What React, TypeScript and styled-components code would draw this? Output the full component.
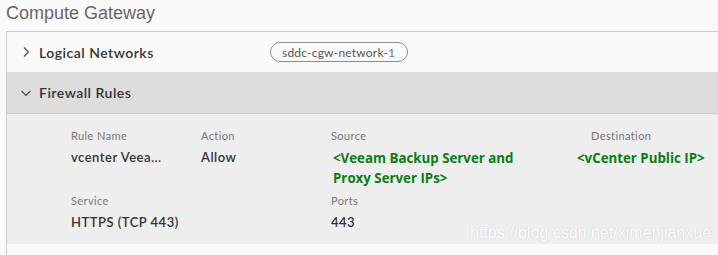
import { createGlobalStyle, styled } from 'styled-components';

const GlobalStyle = createGlobalStyle`
  html, body {
    margin: 0;
    padding: 0;
    background: #fafafa;
    font-family: Lato, "Noto Sans", sans-serif;
  }
`;

interface Field {
  label: string;
  value: string;
  highlight?: boolean;
  span?: number;
  shift?: number;
}

const ruleFields: Field[] = [
  { label: 'Rule Name', value: 'vcenter Veea...' },
  { label: 'Action', value: 'Allow' },
  { label: 'Source', value: '<Veeam Backup Server and Proxy Server IPs>', highlight: true, span: 2, shift: 2 },
  { label: 'Destination', value: '<vCenter Public IP>', highlight: true, shift: -14 },
  { label: 'Service', value: 'HTTPS (TCP 443)', span: 2 },
  { label: 'Ports', value: '443' },
];

function Chevron({ open }: { open?: boolean }) {
  return (
    <ChevronIcon viewBox="0 0 12 12" $open={open}>
      <path d="M4 1.5 L8.5 6 L4 10.5" fill="none" stroke="#4a4a4a" strokeWidth="1.2" />
    </ChevronIcon>
  );
}

export default function App() {
  return (
    <Page>
      <GlobalStyle />
      <Title>Compute Gateway</Title>
      <Panel>
        <Header>
          <Chevron />
          <HeaderText>Logical Networks</HeaderText>
          <Pill>
            sddc-cgw-network-<PillNum>1</PillNum>
          </Pill>
        </Header>
        <Header $active>
          <Chevron open />
          <HeaderText>Firewall Rules</HeaderText>
        </Header>
        <Body>
          <FieldGrid>
            {ruleFields.map((f) => (
              <Cell key={f.label} $span={f.span ?? 1}>
                <Label>{f.label}</Label>
                <Value $highlight={f.highlight} $shift={f.shift ?? 0}>
                  {f.value}
                </Value>
              </Cell>
            ))}
          </FieldGrid>
          <Watermark>https://blog.csdn.net/ximenjianxue</Watermark>
        </Body>
        <Footer />
      </Panel>
    </Page>
  );
}

const Page = styled.div`
  width: 718px;
  height: 255px;
  overflow: hidden;
  padding-left: 6px;
  box-sizing: border-box;
`;

const Title = styled.h1`
  margin: 0;
  padding-top: 3px;
  height: 28px;
  font-family: "Liberation Sans", Arial, sans-serif;
  font-weight: 400;
  font-size: 18px;
  line-height: 20px;
  color: #666;
`;

const Panel = styled.section`
  border-top: 1px solid #cccccc;
  border-left: 1px solid #cccccc;
  width: 760px;
`;

const Header = styled.div<{ $active?: boolean }>`
  display: flex;
  align-items: center;
  height: ${(p) => (p.$active ? '41px' : '40px')};
  padding-left: 13px;
  background: ${(p) => (p.$active ? '#dddddd' : '#fafafa')};
  border-bottom: ${(p) => (p.$active ? '1px solid #cccccc' : 'none')};
`;

const ChevronIcon = styled.svg<{ $open?: boolean }>`
  width: 12px;
  height: 12px;
  margin-right: 7px;
  transform: rotate(${(p) => (p.$open ? '90deg' : '0deg')});
`;

const HeaderText = styled.span`
  font-size: 14px;
  font-weight: 600;
  color: #333;
  letter-spacing: 0.5px;
  width: 231px;
`;

const Pill = styled.span`
  display: inline-flex;
  align-items: center;
  height: 20px;
  box-sizing: border-box;
  padding: 0 12px 0 11px;
  border: 1px solid #8c8c8c;
  border-radius: 10px;
  font-size: 12px;
  color: #565656;
  letter-spacing: 0.2px;
`;

const PillNum = styled.span`
  color: #4a7fb0;
`;

const Body = styled.div`
  position: relative;
  background: #eeeeee;
  height: 130px;
  padding: 15px 0 0 64px;
  box-sizing: border-box;
`;

const FieldGrid = styled.div`
  display: grid;
  grid-template-columns: repeat(5, 130px);
  row-gap: 6px;
`;

const Cell = styled.div<{ $span: number }>`
  grid-column: span ${(p) => p.$span};
`;

const Label = styled.div`
  font-size: 11px;
  line-height: 14px;
  letter-spacing: 0.4px;
  color: #777;
  margin-bottom: 5px;
`;

const Value = styled.div<{ $highlight?: boolean; $shift: number }>`
  margin-left: ${(p) => p.$shift}px;
  font-size: ${(p) => (p.$highlight ? '13.3px' : '13px')};
  line-height: ${(p) => (p.$highlight ? '20px' : '18px')};
  font-weight: ${(p) => (p.$highlight ? 700 : 600)};
  font-family: ${(p) => (p.$highlight ? '"Open Sans", sans-serif' : 'Lato, sans-serif')};
  letter-spacing: ${(p) => (p.$highlight ? '0' : '0.5px')};
  color: ${(p) => (p.$highlight ? '#0a7d12' : '#333')};
  max-width: 200px;
`;

const Watermark = styled.div`
  position: absolute;
  left: 463px;
  bottom: 2px;
  font-family: "Liberation Sans", Arial, sans-serif;
  font-size: 16px;
  color: #ffffff;
  text-shadow: 0 0 1px #bbb;
`;

const Footer = styled.div`
  height: 20px;
  background: #fafafa;
`;
